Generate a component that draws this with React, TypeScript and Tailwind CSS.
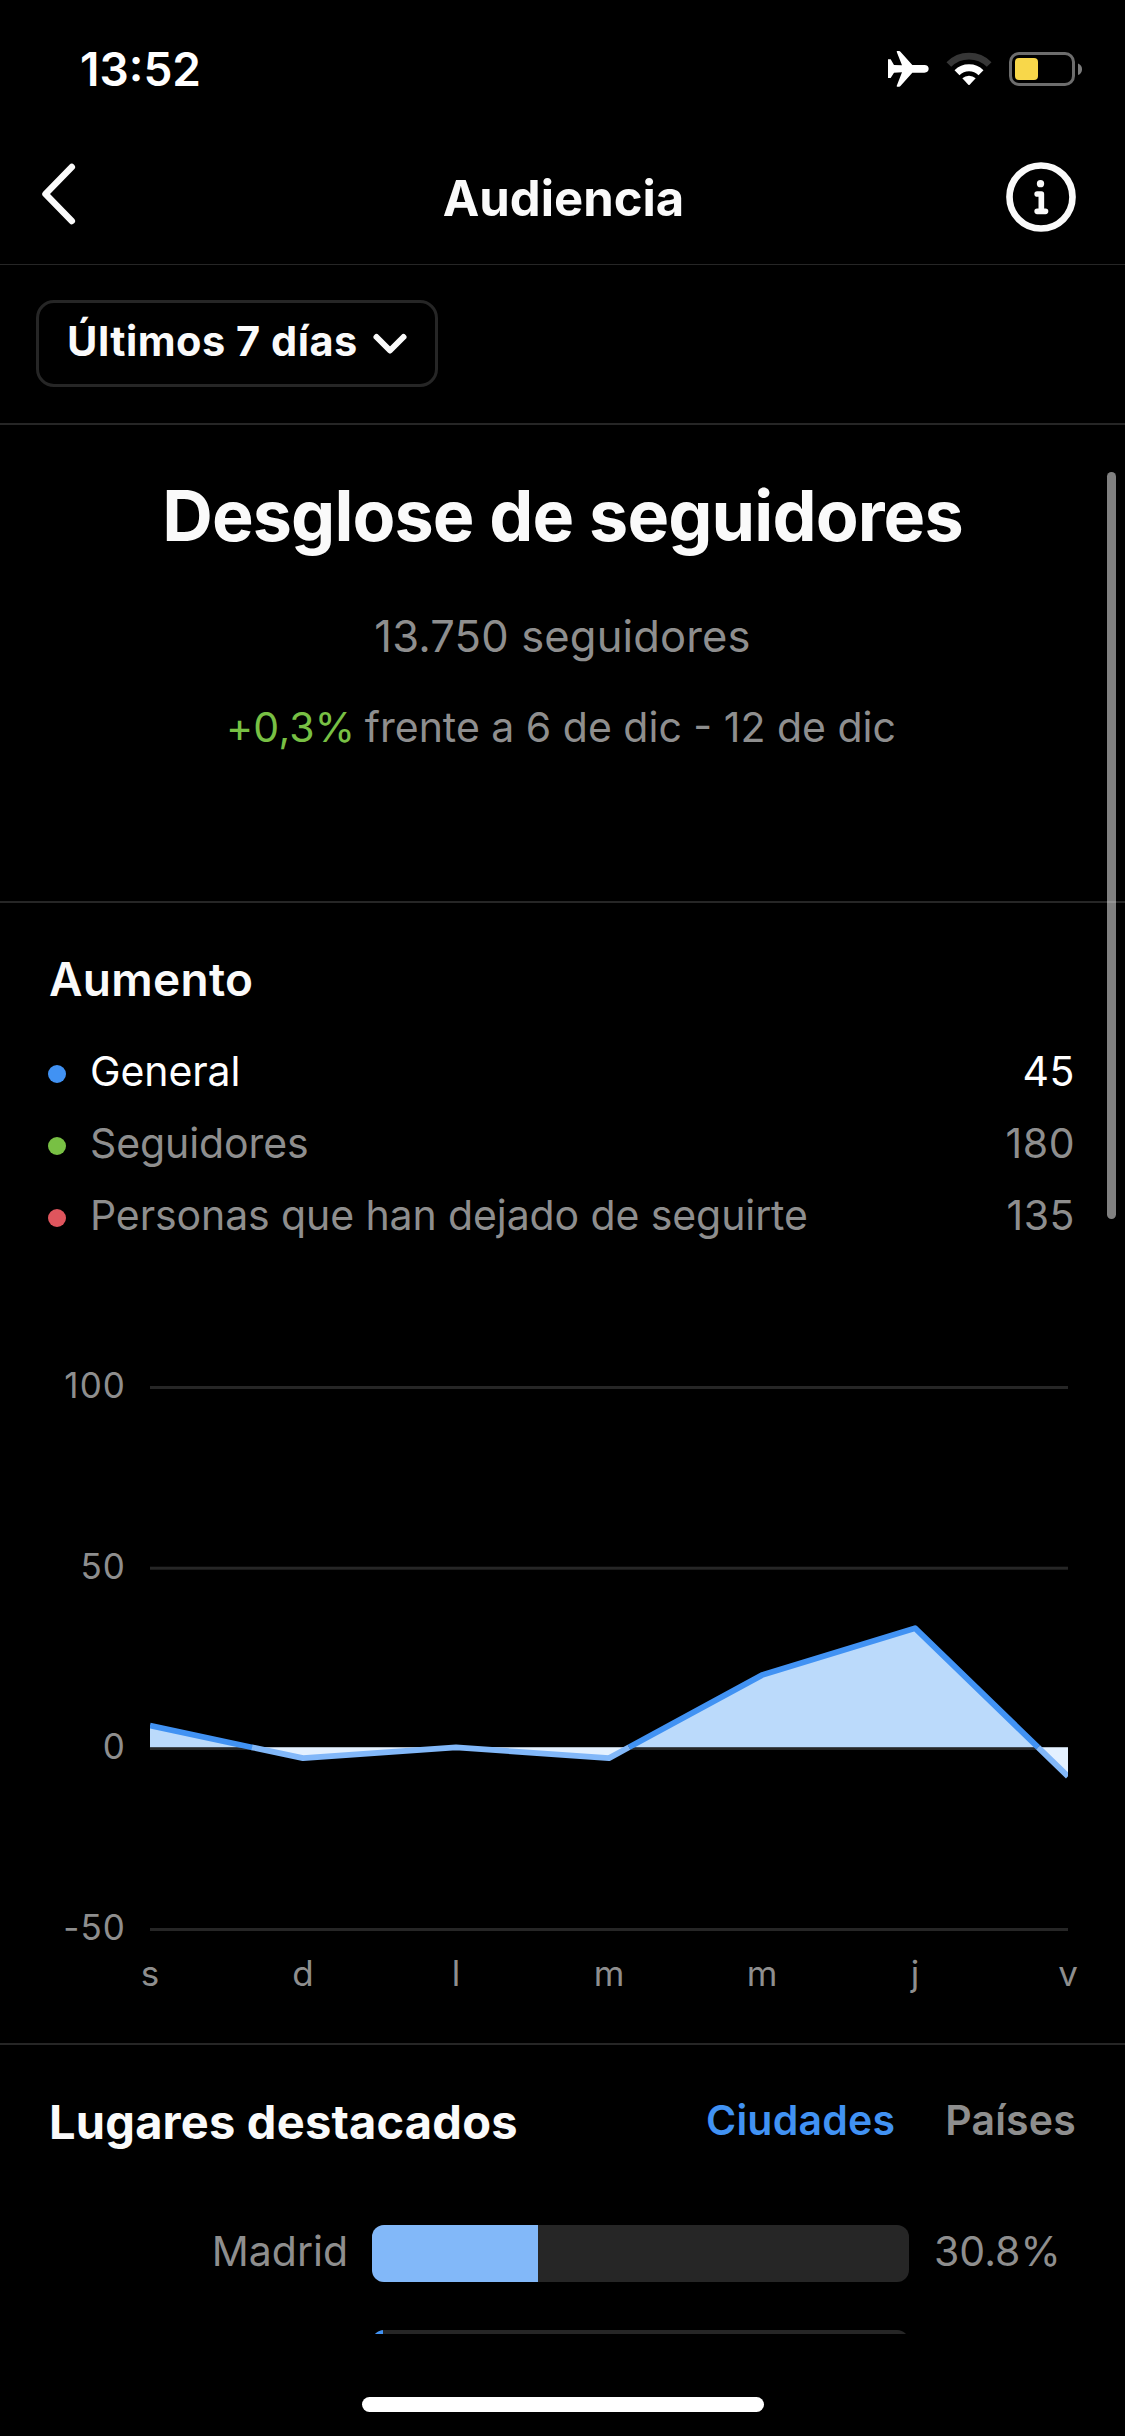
type Series = { label: string; value: number; dot: string; text: string };
type Place = { name: string; share: string; percent: number; fill: string };

const series: Series[] = [
  { label: "General", value: 45, dot: "bg-[#4192f3]", text: "text-white" },
  { label: "Seguidores", value: 180, dot: "bg-[#78c044]", text: "text-[#8e8e8e]" },
  { label: "Personas que han dejado de seguirte", value: 135, dot: "bg-[#df555d]", text: "text-[#8e8e8e]" },
];

const places: Place[] = [
  { name: "Madrid", share: "30.8%", percent: 30.9, fill: "bg-[#82b8f9]" },
  { name: "", share: "", percent: 2, fill: "bg-[#4192f3]" },
];

const days = ["s", "d", "l", "m", "m", "j", "v"];
const ticks = ["100", "50", "0", "-50"];

function StatusBar() {
  return (
    <div className="flex h-[132px] items-center justify-between pt-[6px] pr-[43px] pl-[80px]">
      <span className="text-[46px] leading-none font-semibold">13:52</span>
      <div className="flex items-center">
        <svg className="mr-[17px] h-[36px] w-[42px]" viewBox="21 33 126 108" fill="#fff">
          <path d="M24 58H32L42 75L66 76L50 35Q50 33 52 33H57Q60 33 62 36L97 75H133Q146 76 146 86.500Q146 97 133 98H97L62 137Q60 140 57 140H52Q50 140 50 138L66 97L42 98L32 114H24Z" />
        </svg>
        <svg className="mr-[17.5px] h-[34px] w-[46px]" viewBox="197 35 138 102" fill="none">
          <path d="M205.500 72.500A85.500 85.500 0 0 1 326.500 72.500" stroke="#363636" strokeWidth="20" />
          <path d="M230 97A51 51 0 0 1 302 97" stroke="#fff" strokeWidth="21" />
          <path d="M246 114A29 29 0 0 1 286 114L268 133Q266 135 264 133Z" fill="#fff" />
        </svg>
        <svg className="h-[34px] w-[73px]" viewBox="0 0 73 34" fill="none">
          <rect x="1.5" y="1.500" width="63" height="31" rx="8.500" stroke="#6d6d6d" strokeWidth="3" />
          <rect x="6" y="6" width="23" height="22" rx="4" fill="#f8d74a" />
          <path d="M69 11.500Q73 13 73 17.200Q73 21.500 69 23Z" fill="#7c7c7c" />
        </svg>
      </div>
    </div>
  );
}

function Header() {
  return (
    <header className="grid h-[133px] grid-cols-3 items-center border-b border-[#262626] pr-[48px] pl-[40px]">
      <svg className="mb-[8px] h-[64px] w-[36px]" viewBox="0 0 36 64" fill="none" stroke="#fafafa" strokeWidth="6.500" strokeLinecap="round" strokeLinejoin="round">
        <path d="M31.800 5L5.500 32L31.800 59" />
      </svg>
      <h1 className="ml-[10px] text-center text-[49px] leading-none font-bold text-[#fafafa]">Audiencia</h1>
      <svg className="mb-[2px] h-[72px] w-[72px] justify-self-end" viewBox="14.500 18 216 216" fill="none" stroke="#fafafa">
        <circle cx="122.500" cy="126" r="94.500" strokeWidth="20" />
        <circle cx="121" cy="86" r="11" fill="#fafafa" stroke="none" />
        <path d="M111 117H123.500V169M111 169H136" strokeWidth="17" strokeLinecap="round" strokeLinejoin="round" />
      </svg>
    </header>
  );
}

function Chart() {
  return (
    <div className="pt-[112px]">
      <div className="flex h-[586px]">
        <div className="flex w-[126px] flex-col justify-between text-right text-[35px] leading-[44px] tracking-[1.1px] text-[#8e8e8e]">
          {ticks.map((t) => (
            <span key={t}>{t}</span>
          ))}
        </div>
        <svg className="ml-[24px] h-[586px] w-[918px]" viewBox="0 0 918 586" fill="none">
          <g fill="#262626">
            <rect y="23" width="918" height="3" />
            <rect y="203.700" width="918" height="3" />
            <rect y="384.300" width="918" height="2.700" />
            <rect y="565" width="918" height="3" />
          </g>
          <path d="M0 384.300V362.500L102 384.300ZM479 384.300L612 312.100L765 265.200L888.100 384.300Z" fill="#bbdafb" />
          <path d="M102 384.300L153 395.100L306 384.400L459 395.100L479 384.300ZM888.100 384.300L918 413.300V384.300Z" fill="#e4f1ff" />
          <g strokeWidth="5.800" strokeLinejoin="round">
            <path d="M0 362.500L102.500 384.500M479 384.300L612 312.100L765 265.200L888.100 384.300" stroke="#4192f3" />
            <path d="M102 384.300L153 395.100L306 384.400L459 395.100L479 384.300M888.100 384.300L918 413.300" stroke="#82b8f9" />
          </g>
        </svg>
      </div>
      <div className="mt-[2px] ml-[150px] flex w-[918px] justify-between text-[35px] leading-[44px] text-[#8e8e8e]">
        {days.map((d, i) => (
          <span key={i} className="flex w-0 justify-center">
            {d}
          </span>
        ))}
      </div>
    </div>
  );
}

function PlaceRow({ place }: { place: Place }) {
  return (
    <div className="flex h-[57px] shrink-0 items-center text-[41px] leading-[52px] text-[#8e8e8e]">
      <span className="mb-[5px] w-[348px] text-right">{place.name}</span>
      <div className="ml-[24px] h-[57px] w-[537px] overflow-hidden rounded-[12px] bg-[#262626]">
        <div className={`h-full ${place.fill}`} style={{ width: `${place.percent}%` }} />
      </div>
      <span className="mb-[5px] ml-[25px]">{place.share}</span>
    </div>
  );
}

export default function App() {
  return (
    <div className="relative h-[2436px] w-[1125px] overflow-hidden bg-black font-['Inter',sans-serif] whitespace-nowrap text-white">
      <StatusBar />
      <Header />

      <div className="h-[160px] border-b-2 border-[#262626] pt-[35px] pl-[36px]">
        <button className="flex h-[87px] w-[402px] items-center rounded-[18px] border-[3px] border-[#262626] pb-[4px] pl-[28px] text-[41.5px] leading-none font-bold tracking-[0.5px] text-[#fafafa]">
          Últimos 7 días
          <svg className="mt-[5px] ml-[14px] h-[24px] w-[36px] shrink-0" viewBox="0 0 36 24" fill="none" stroke="#fafafa" strokeWidth="6" strokeLinecap="round" strokeLinejoin="round">
            <path d="M4.500 5L18 18.500L31.500 5" />
          </svg>
        </button>
      </div>

      <section className="h-[478px] border-b-2 border-[#262626] pt-[41px] text-center text-[41px] leading-[60px] text-[#8e8e8e]">
        <h2 className="text-[70px] leading-[100px] font-bold tracking-[-0.88px] text-[#fafafa]">Desglose de seguidores</h2>
        <p className="mt-[40px] text-[43.5px] tracking-[0.15px]">13.750 seguidores</p>
        <p className="mt-[31px] pr-[3px]">
          <span className="mr-[-2px] tracking-[0.2px] text-[#78c044]">+0,3%</span> frente a 6 de dic - 12 de dic
        </p>
      </section>

      <section className="h-[1142px] border-b-2 border-[#262626] pt-[46px]">
        <h3 className="pl-[49px] text-[46px] leading-[60px] font-semibold tracking-[0.3px] text-[#fafafa]">Aumento</h3>
        <ul className="mt-[26px] pr-[50px] pl-[48px] text-[41px]">
          {series.map((s) => (
            <li key={s.label} className={`flex h-[72px] items-center leading-none ${s.text}`}>
              <span className={`mt-[6px] h-[18px] w-[18px] rounded-full ${s.dot}`} />
              <span className="ml-[24px] tracking-[-0.1px]">{s.label}</span>
              <span className="ml-auto tracking-[0.5px]">{s.value}</span>
            </li>
          ))}
        </ul>
        <Chart />
      </section>

      <section className="flex h-[289px] flex-col overflow-hidden pt-[46px]">
        <div className="flex h-[60px] shrink-0 items-center pr-[49px] pl-[49px] text-[41px] leading-none font-semibold tracking-[0.2px]">
          <h3 className="text-[47px] leading-none font-bold text-[#fafafa]">Lugares destacados</h3>
          <span className="mb-[2px] ml-auto text-[#4192f3]">Ciudades</span>
          <span className="mb-[2px] ml-[50px] text-[#8e8e8e]">Países</span>
        </div>
        <div className="mt-[74px] flex flex-col gap-[48px]">
          {places.map((p) => (
            <PlaceRow key={p.name} place={p} />
          ))}
        </div>
      </section>

      <div className="mt-[63px] ml-[362px] h-[15px] w-[402px] rounded-full bg-white" />
      <div className="absolute top-[472px] right-[9px] h-[747px] w-[9px] rounded-full bg-white/50" />
    </div>
  );
}
